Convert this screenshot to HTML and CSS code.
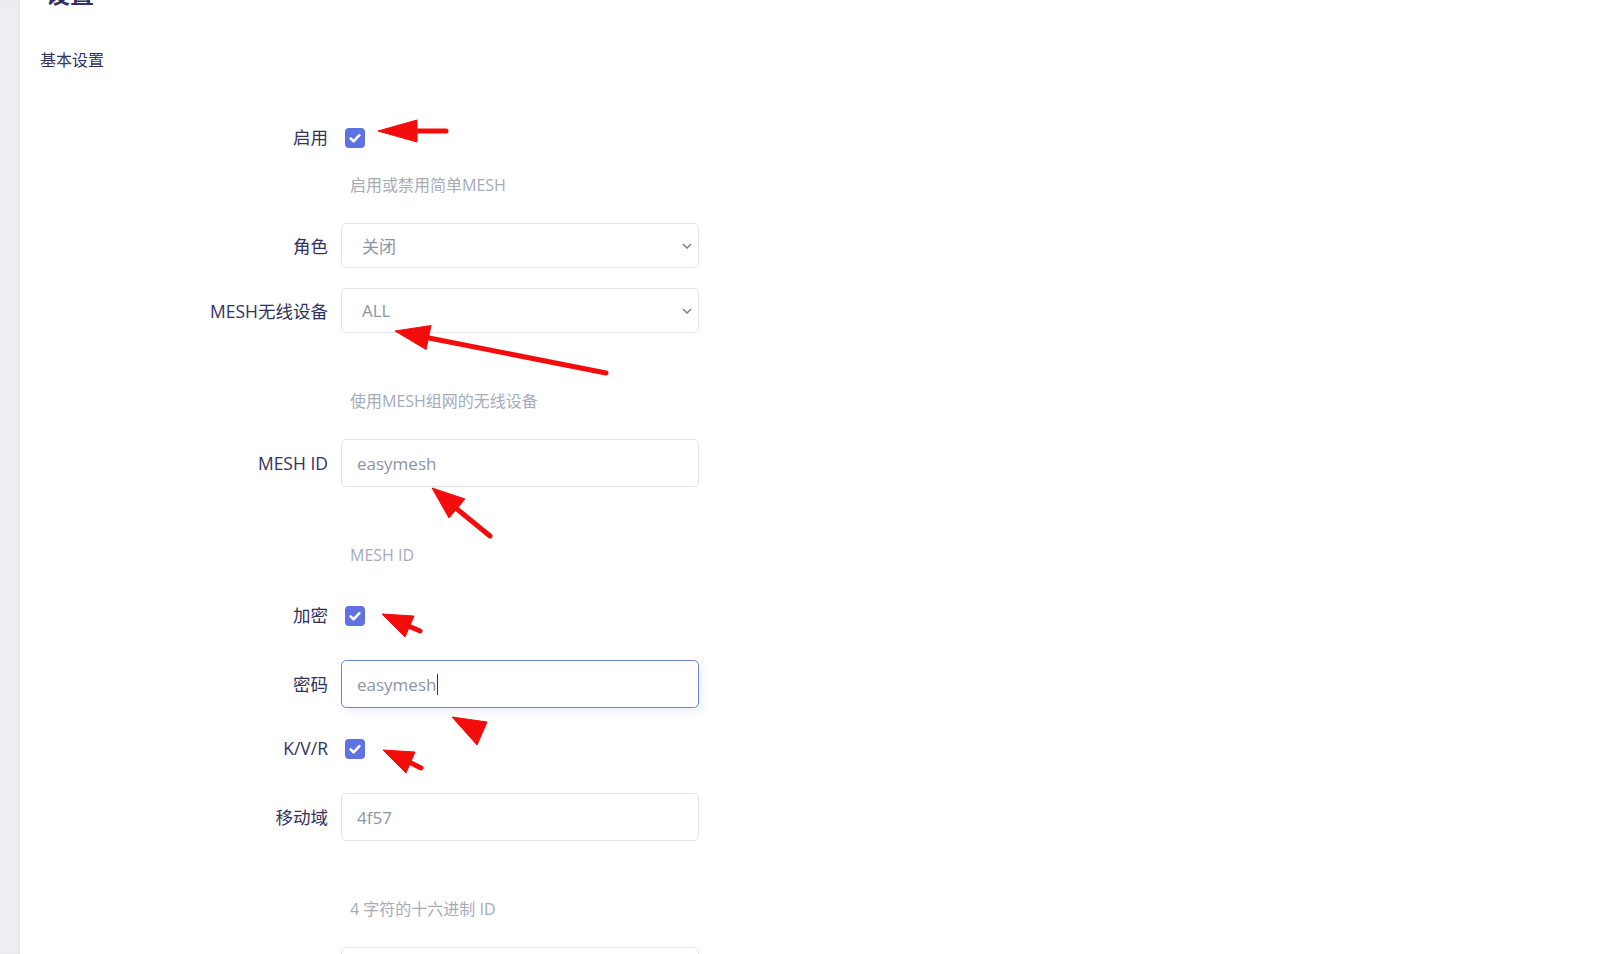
FILE: index.html
```html
<!DOCTYPE html>
<html lang="zh-CN">
<head>
    <meta charset="UTF-8">
    <meta name="viewport" content="width=device-width, initial-scale=1.0">
    <title>设置</title>
    <link rel="stylesheet" href="styles.css">
</head>
<body>
    <div class="page">
        <aside class="sidebar"></aside>
        <main class="main">
            <h2 class="page-title">设置</h2>
            <h3 class="section-title">基本设置</h3>

            <div class="form">
                <div class="row row-check">
                    <label class="row-label">启用</label>
                    <div class="row-field">
                        <span class="checkbox">
                            <svg viewBox="0 0 20 20"><path d="M5.6 10.4l3 2.9 5.8-6.2"/></svg>
                        </span>
                    </div>
                </div>
                <p class="help help-near">启用或禁用简单MESH</p>

                <div class="row">
                    <label class="row-label">角色</label>
                    <div class="row-field">
                        <div class="select">
                            <span>关闭</span>
                            <svg class="chevron" viewBox="0 0 10 6"><path d="M1 1l4 4 4-4"/></svg>
                        </div>
                    </div>
                </div>
                <div class="row">
                    <label class="row-label">MESH无线设备</label>
                    <div class="row-field">
                        <div class="select">
                            <span>ALL</span>
                            <svg class="chevron" viewBox="0 0 10 6"><path d="M1 1l4 4 4-4"/></svg>
                        </div>
                    </div>
                </div>
                <p class="help">使用MESH组网的无线设备</p>

                <div class="row">
                    <label class="row-label">MESH ID</label>
                    <div class="row-field">
                        <div class="input">easymesh</div>
                    </div>
                </div>
                <p class="help">MESH ID</p>

                <div class="row row-check">
                    <label class="row-label">加密</label>
                    <div class="row-field">
                        <span class="checkbox">
                            <svg viewBox="0 0 20 20"><path d="M5.6 10.4l3 2.9 5.8-6.2"/></svg>
                        </span>
                    </div>
                </div>
                <div class="row">
                    <label class="row-label">密码</label>
                    <div class="row-field">
                        <div class="input focused">easymesh<span class="caret"></span></div>
                    </div>
                </div>
                <div class="row row-check">
                    <label class="row-label">K/V/R</label>
                    <div class="row-field">
                        <span class="checkbox">
                            <svg viewBox="0 0 20 20"><path d="M5.6 10.4l3 2.9 5.8-6.2"/></svg>
                        </span>
                    </div>
                </div>
                <div class="row">
                    <label class="row-label">移动域</label>
                    <div class="row-field">
                        <div class="input">4f57</div>
                    </div>
                </div>
                <p class="help">4 字符的十六进制 ID</p>

                <div class="row">
                    <label class="row-label"></label>
                    <div class="row-field">
                        <div class="input"></div>
                    </div>
                </div>
            </div>
        </main>

        <!-- red annotation arrows drawn over the screenshot -->
        <svg class="marks" viewBox="0 0 1608 954">
            <g class="arrow">
                <line x1="412" y1="131" x2="446" y2="131"/>
                <polygon points="378,131 417,120 417,142"/>
            </g>
            <g class="arrow">
                <line x1="424" y1="337" x2="606" y2="373"/>
                <polygon points="395,331 431,325.5 426,349.5"/>
            </g>
            <g class="arrow">
                <line x1="452" y1="505" x2="490" y2="536"/>
                <polygon points="432,488 465,499 449,518"/>
            </g>
            <g class="arrow">
                <line x1="406" y1="625" x2="420" y2="631"/>
                <polygon points="382,614 414,616 405,637"/>
            </g>
            <g class="arrow">
                <polygon points="452,717 487,722 477,745"/>
            </g>
            <g class="arrow">
                <line x1="407" y1="761" x2="421" y2="768"/>
                <polygon points="383,750 415,752 406,773"/>
            </g>
        </svg>
    </div>
</body>
</html>
```

FILE: styles.css
```css
body {
    margin: 0;
    padding: 0;
    font-family: "Open Sans", "Noto Sans CJK SC", sans-serif;
    color: #32325d;
    background: #fff;
    overflow: hidden;
}
.page {
    position: relative;
    display: flex;
    height: 954px;
}
.sidebar {
    flex: none;
    width: 20px;
    background: #eceef1;
    box-shadow: inset -2px 0 3px rgba(0, 0, 0, 0.03);
}
.main {
    flex: 1;
    padding: 0 20px;
}
.page-title {
    margin: -21px 0 0 6px;
    font-size: 24px;
    line-height: 30px;
    font-weight: 700;
    color: #32325d;
}
.section-title {
    margin: 41px 0 0;
    font-size: 16px;
    line-height: 20px;
    font-weight: 400;
    color: #32325d;
}
.form {
    margin-top: 45px;
}
.row {
    display: flex;
    align-items: center;
    margin-top: 20px;
}
.form .row:first-child {
    margin-top: 0;
}
.row-check {
    height: 46px;
}
.row-check .row-label {
    margin-top: -3px;
}
.row-label {
    flex: none;
    width: 301px;
    padding-right: 13px;
    box-sizing: border-box;
    text-align: right;
    font-size: 17.5px;
    line-height: 24px;
    color: #32325d;
}
.row-field {
    display: flex;
    align-items: center;
}
.checkbox {
    display: block;
    width: 20px;
    height: 20px;
    margin-left: 4px;
    border-radius: 4px;
    background: #5e72e4;
}
.checkbox svg {
    display: block;
    width: 20px;
    height: 20px;
}
.checkbox path {
    fill: none;
    stroke: #fff;
    stroke-width: 2.6;
    stroke-linecap: round;
    stroke-linejoin: round;
}
.select,
.input {
    display: flex;
    align-items: center;
    width: 358px;
    box-sizing: border-box;
    border: 1px solid #e1e4ea;
    border-radius: 5px;
    background: #fff;
    font-size: 17px;
    color: #8d95a5;
}
.select {
    height: 45px;
    padding: 0 6px 0 20px;
    justify-content: space-between;
}
.input {
    height: 48px;
    padding: 0 15px;
}
.input.focused {
    border-color: #7083dc;
    box-shadow: 3px 4px 8px rgba(94, 114, 228, 0.12);
}
.caret {
    display: inline-block;
    width: 1px;
    height: 21px;
    margin-left: 1px;
    background: #32325d;
}
.chevron {
    width: 10px;
    height: 6px;
}
.chevron path {
    fill: none;
    stroke: #7b8293;
    stroke-width: 1.6;
}
.help {
    margin: 58px 0 0 310px;
    font-size: 16px;
    line-height: 20px;
    color: #a6abb8;
}
.help-near {
    margin-top: 14px;
}
.help + .row {
    margin-top: 28px;
}
.row + .row-check {
    margin-top: 18px;
}
.row-check + .row {
    margin-top: 21px;
}
.marks {
    position: absolute;
    top: 0;
    left: 0;
    width: 1608px;
    height: 954px;
    pointer-events: none;
}
.arrow line {
    stroke: #f20c0c;
    stroke-width: 5;
    stroke-linecap: round;
}
.arrow polygon {
    fill: #f20c0c;
    stroke: #f20c0c;
    stroke-width: 1;
    stroke-linejoin: round;
}
```
